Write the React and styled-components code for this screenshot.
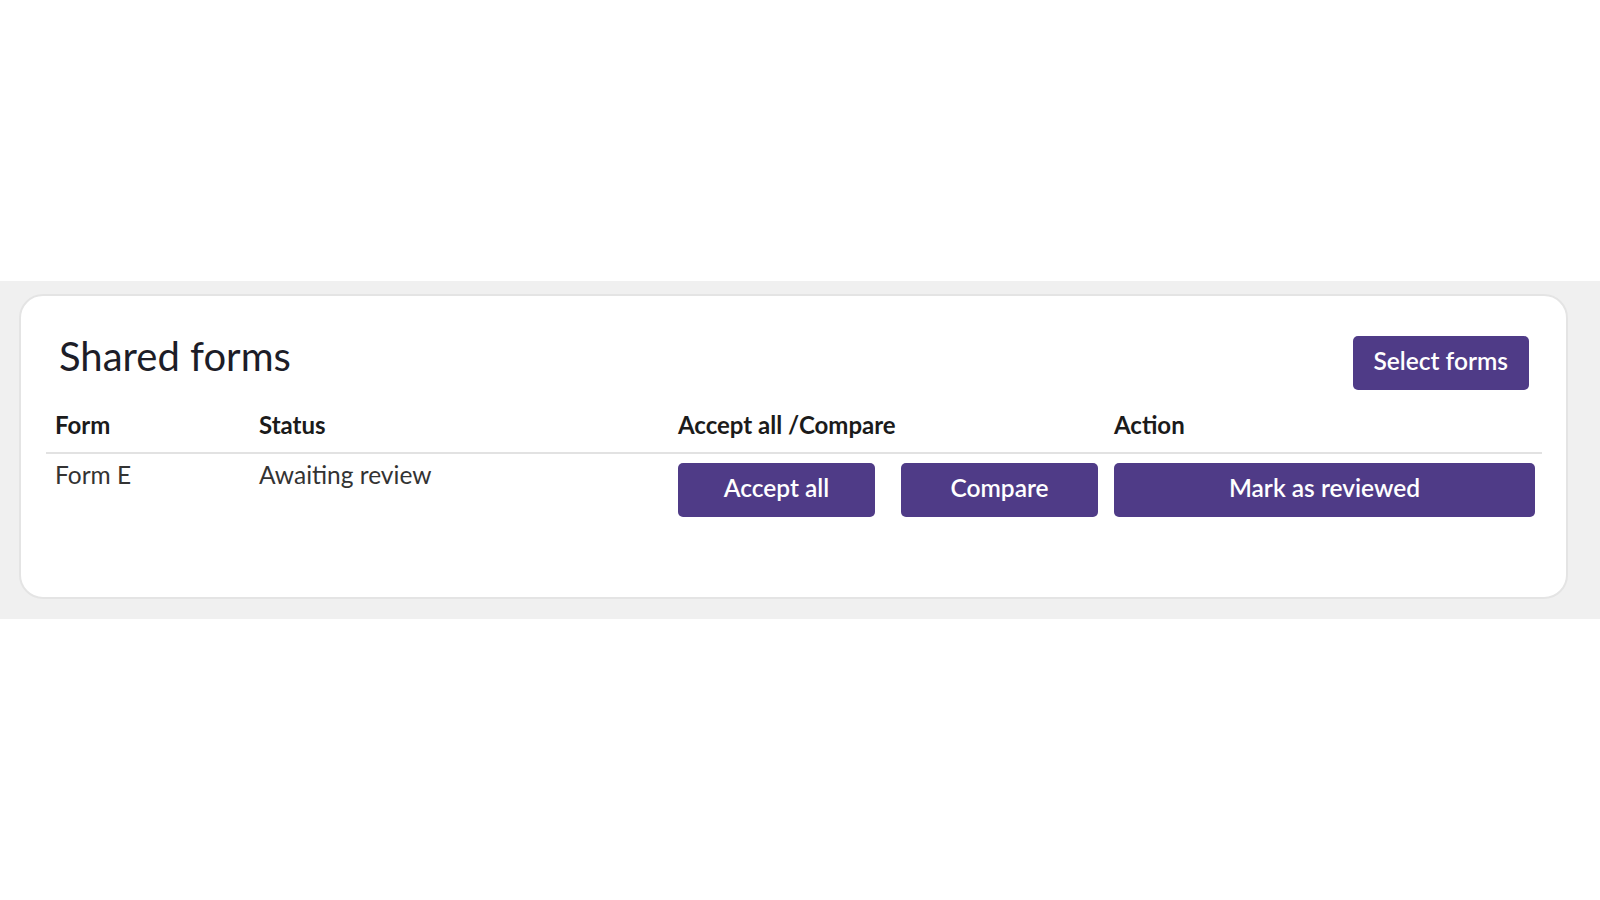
import React from "react";
import styled, { createGlobalStyle } from "styled-components";

const GlobalStyle = createGlobalStyle`
  html, body {
    margin: 0;
    padding: 0;
    background: #ffffff;
    font-family: Lato, "Open Sans", "Liberation Sans", sans-serif;
  }
  * {
    box-sizing: border-box;
  }
`;

const rows = [{ form: "Form E", status: "Awaiting review" }];

function App() {
  return (
    <>
      <GlobalStyle />
      <Page>
        <Band>
          <Card>
            <CardHeader>
              <Title>Shared forms</Title>
              <Button>Select forms</Button>
            </CardHeader>
            <Table>
              <HeadRow>
                <HeadCell>Form</HeadCell>
                <HeadCell>Status</HeadCell>
                <HeadCell>Accept all /Compare</HeadCell>
                <HeadCell>Action</HeadCell>
              </HeadRow>
              {rows.map((row) => (
                <BodyRow key={row.form}>
                  <Cell>{row.form}</Cell>
                  <Cell>{row.status}</Cell>
                  <ButtonCell>
                    <Button $fixed>Accept all</Button>
                    <Button $fixed>Compare</Button>
                  </ButtonCell>
                  <ButtonCell>
                    <Button $wide>Mark as reviewed</Button>
                  </ButtonCell>
                </BodyRow>
              ))}
            </Table>
          </Card>
        </Band>
      </Page>
    </>
  );
}

const Page = styled.div`
  min-height: 100vh;
  display: flex;
  align-items: center;
`;

const Band = styled.div`
  width: 100%;
  background-color: #f0f0f0;
  padding: 13px 32px 20px 19px;
`;

const Card = styled.div`
  background-color: #ffffff;
  border: 2px solid #e4e4e4;
  border-radius: 24px;
  padding: 40px 24px 71px 25px;
`;

const CardHeader = styled.div`
  display: flex;
  justify-content: space-between;
  align-items: flex-start;
  padding: 0 13px;
  margin-bottom: 12px;
`;

const Title = styled.h2`
  margin: 0;
  font-size: 40px;
  line-height: 40px;
  font-weight: 400;
  color: #1d1d28;
`;

const Table = styled.div`
  display: flex;
  flex-direction: column;
`;

const columns = "204px 419px 436px 1fr";

const HeadRow = styled.div`
  display: grid;
  grid-template-columns: ${columns};
  border-bottom: 2px solid #e2e2e2;
`;

const BodyRow = styled.div`
  display: grid;
  grid-template-columns: ${columns};
`;

const HeadCell = styled.div`
  padding: 8px 9px 13px;
  font-size: 24px;
  font-weight: 700;
  color: #1b1b1b;
`;

const Cell = styled.div`
  padding: 9px;
  font-size: 24.5px;
  line-height: 24px;
  color: #333333;
`;

const ButtonCell = styled.div`
  display: flex;
  gap: 26px;
  padding: 9px 7px 9px 9px;
`;

const Button = styled.button`
  height: 54px;
  padding: 0 21px 5px;
  border: none;
  border-radius: 5px;
  background-color: #4f3b87;
  color: #ffffff;
  font-family: inherit;
  font-size: 24.5px;
  font-weight: 600;
  cursor: pointer;
  width: ${(p) => (p.$fixed ? "197px" : p.$wide ? "100%" : "auto")};
`;

export default App;
